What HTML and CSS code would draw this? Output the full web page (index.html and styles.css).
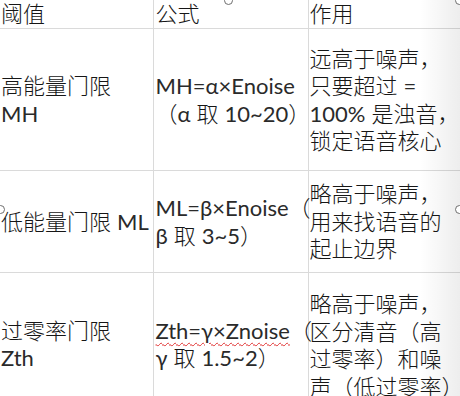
FILE: index.html
```html
<!DOCTYPE html>
<html lang="zh">
<head>
<meta charset="utf-8">
<link rel="stylesheet" href="styles.css">
</head>
<body>
<div class="page">
  <table class="grid">
    <colgroup><col class="c1"><col class="c2"><col class="c3"></colgroup>
    <tr class="head">
      <td>阈值</td><td>公式</td><td>作用</td>
    </tr>
    <tr class="r1">
      <td><span class="ln">高能量门限</span><span class="ln lat">MH</span></td>
      <td><span class="ln lat">MH=α×Enoise</span><span class="ln">（<span class="lat">α</span> 取 <span class="lat">10~20</span>）</span></td>
      <td><span class="ln">远高于噪声，</span><span class="ln">只要超过 <span class="lat">=</span></span><span class="ln"><span class="lat">100%</span> 是浊音，</span><span class="ln">锁定语音核心</span></td>
    </tr>
    <tr class="r2">
      <td><span class="ln">低能量门限 <span class="lat">ML</span></span></td>
      <td><span class="ln"><span class="lat">ML=β×Enoise</span>（</span><span class="ln"><span class="lat">β</span> 取 <span class="lat">3~5</span>）</span></td>
      <td><span class="ln">略高于噪声，</span><span class="ln">用来找语音的</span><span class="ln">起止边界</span></td>
    </tr>
    <tr class="r3">
      <td><span class="ln">过零率门限</span><span class="ln lat">Zth</span></td>
      <td><span class="ln"><span class="lat spell">Zth=γ×Znoise</span>（</span><span class="ln"><span class="lat">γ</span> 取 <span class="lat">1.5~2</span>）</span></td>
      <td><span class="ln">略高于噪声，</span><span class="ln">区分清音（高</span><span class="ln">过零率）和噪</span><span class="ln">声（低过零率）</span></td>
    </tr>
  </table>
  <div class="shade"></div>
  <span class="handle h-top"></span>
  <span class="handle h-tr"></span>
  <span class="handle h-ml"></span>
  <span class="handle h-mr"></span>
</div>
</body>
</html>
```
FILE: styles.css
```css
html, body {
  margin: 0;
  padding: 0;
  background: #ffffff;
}
.page {
  position: relative;
  width: 460px;
  height: 396px;
  overflow: hidden;
  background: #ffffff;
}
.grid {
  border-collapse: collapse;
  table-layout: fixed;
  width: 480px;
  font-family: Lato, "Noto Sans CJK SC", sans-serif;
  font-size: 22px;
  font-weight: 300;
  line-height: 27.5px;
  color: #161616;
}
.lat { font-weight: 400; color: #2a2a2a; }
.c1 { width: 153px; }
.c2 { width: 155px; }
.c3 { width: 172px; }
.grid td {
  border: 1px solid #dadada;
  border-top: none;
  padding: 0 0 0 1px;
  vertical-align: middle;
  white-space: nowrap;
}
.grid td:first-child { border-left: none; }
.grid td:nth-child(2) { padding-left: 2px; }
.ln { display: block; }
.head td { height: 28px; vertical-align: top; line-height: 27px; }
.r1 td { height: 141px; }
.r2 td { height: 101px; }
.r3 td { height: 140px; }
.r3 td:nth-child(3) { padding-top: 2px; }
.spell {
  text-decoration: underline wavy #e03030;
  text-decoration-thickness: 1px;
  text-underline-offset: 3px;
}
.shade {
  position: absolute;
  top: 0;
  right: 0;
  width: 40px;
  height: 100%;
  background: linear-gradient(to right, rgba(0,0,0,0), rgba(0,0,0,0.07));
  pointer-events: none;
}
.handle {
  position: absolute;
  width: 9px;
  height: 9px;
  border: 1.5px solid #6e6e6e;
  border-radius: 50%;
  background: #ffffff;
  box-sizing: border-box;
}
.h-top { left: 224px; top: -4px; }
.h-tr { left: 455px; top: -4px; }
.h-ml { left: -4px; top: 205px; }
.h-mr { left: 455px; top: 205px; }
```
